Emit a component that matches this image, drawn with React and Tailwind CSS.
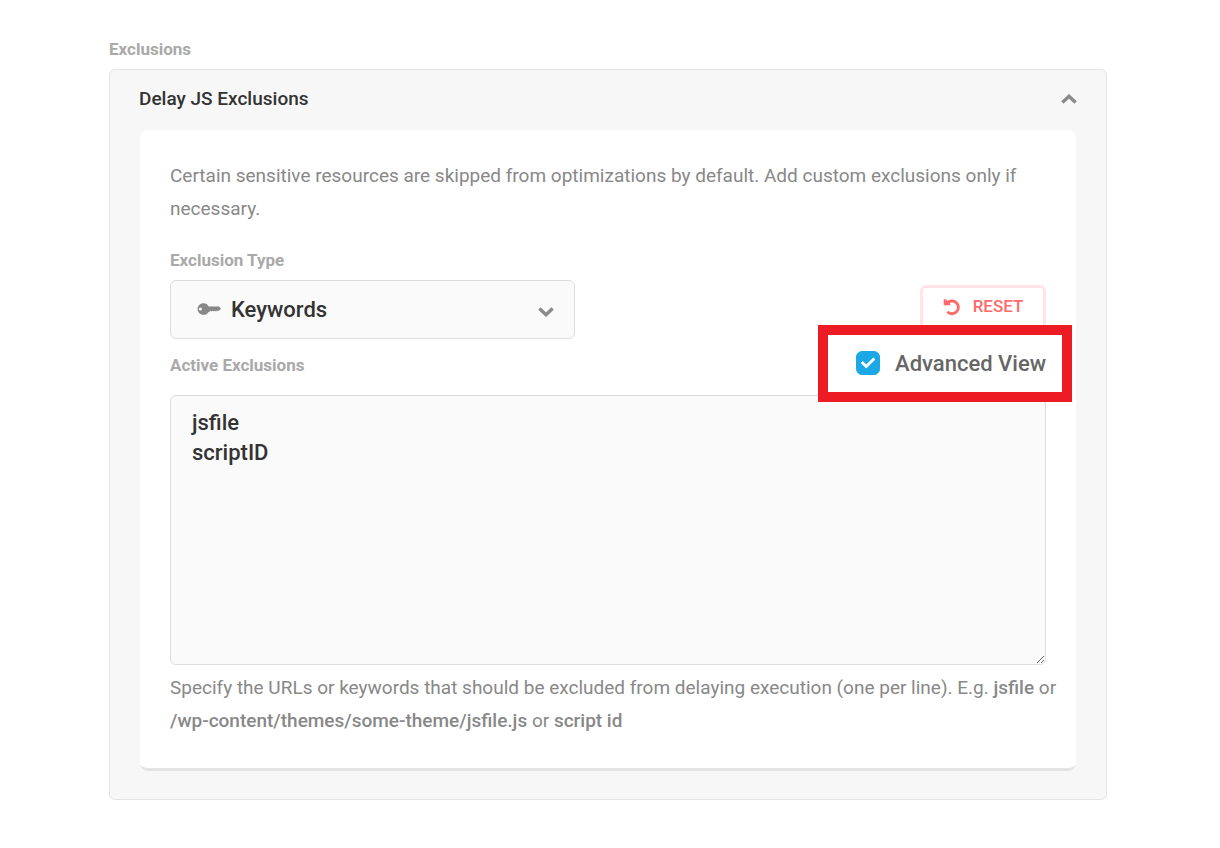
import { useState } from "react";
import { FaCheck } from "react-icons/fa";

function KeyIcon() {
  return (
    <svg viewBox="0 0 24 12" className="h-3 w-6" fill="currentColor" aria-hidden="true">
      <path
        fillRule="evenodd"
        d="M6.500 0.200C3 0.200 0.600 2.700 0.600 6s2.400 5.800 5.900 5.800c2.200 0 3.900-1 5-2.900l1.300-.5.9-.7 1 .8 1.100-.8 1.100.9 1.100-.9 1 .8 1-.8h2L24 5.700 22.200 3.600H11.700C10.700 1.400 8.900.2 6.500.2ZM3.400 4.500a1.500 1.500 0 1 1 0 3 1.500 1.500 0 0 1 0-3Z"
      />
    </svg>
  );
}

function UndoIcon() {
  return (
    <svg viewBox="0 0 18 18" className="size-[18px]" fill="none" aria-hidden="true">
      <path d="M4 5.300A6.400 6.400 0 1 1 4.300 13.700" stroke="currentColor" strokeWidth="2.900" />
      <path d="M0.700 1.200v6.100h6.500V5.600L2.900 1.200Z" fill="currentColor" />
    </svg>
  );
}

function Chevron({ up = false }) {
  return (
    <svg viewBox="0 0 16 10" className="h-2.5 w-4" fill="none" stroke="#8a8a8a" strokeWidth="3.400" aria-hidden="true">
      <path d={up ? "M1.400 8.600 8 2.300l6.600 6.300" : "M1.400 1.400 8 7.700l6.600-6.300"} />
    </svg>
  );
}

const caption = "text-[17px] leading-6 font-bold text-[#a9a9a9]";

export default function App() {
  const [open, setOpen] = useState(true);
  const [advanced, setAdvanced] = useState(true);

  return (
    <main className="bg-white pt-[37px] pr-[113px] pb-12 pl-[109px] font-['Roboto',sans-serif]">
      <h2 className={caption}>Exclusions</h2>
      <section className="mt-2 rounded-md border border-[#e4e4e4] bg-[#f7f7f7] px-[29px] pb-7">
        <button
          type="button"
          aria-expanded={open}
          onClick={() => setOpen(!open)}
          className="flex h-15 w-full items-center justify-between pb-0.5 text-[19px] font-medium text-[#333]"
        >
          <span>Delay JS Exclusions</span>
          <Chevron up />
        </button>
        {open && (
          <div className="mx-px rounded-lg border-b-3 border-[#e4e4e4] bg-white px-[30px] pt-[29px] pb-[31px] text-[#888]">
            <p className="text-[19px] leading-[33px]">
              Certain sensitive resources are skipped from optimizations by default. Add custom exclusions only if
              necessary.
            </p>
            <label htmlFor="type" className={`${caption} mt-[23px] block`}>
              Exclusion Type
            </label>
            <div className="mt-2 flex items-start justify-between">
              <div className="relative w-[405px]">
                <select
                  id="type"
                  className="h-[59px] w-full appearance-none rounded-md border border-[#ddd] bg-[#fafafa] pr-12 pl-15 text-[22px] font-medium text-[#333]"
                >
                  <option>Keywords</option>
                </select>
                <span className="pointer-events-none absolute inset-y-0 left-[27px] flex items-center pb-0.5">
                  <KeyIcon />
                </span>
                <span className="pointer-events-none absolute inset-y-0 right-[21px] flex items-center pt-1">
                  <Chevron />
                </span>
              </div>
              <button
                type="button"
                className="mt-[5px] flex h-11 w-[126px] items-center justify-center gap-3 rounded-md border-3 border-[#ffe3e7] text-[17px] font-medium text-[#ff6b6b]"
              >
                <UndoIcon />
                RESET
              </button>
            </div>
            <div className="mt-2 flex h-12 items-start justify-between">
              <label htmlFor="list" className={`${caption} pt-1.5`}>
                Active Exclusions
              </label>
              <label className="relative flex h-8 items-center gap-[15px] text-[22px] font-medium text-[#666]">
                <span className="relative flex size-6">
                  <input
                    type="checkbox"
                    checked={advanced}
                    onChange={(e) => setAdvanced(e.target.checked)}
                    className="size-6 appearance-none rounded-md border border-[#1ba8e5] bg-white checked:bg-[#1ba8e5]"
                  />
                  <FaCheck className="pointer-events-none absolute inset-0 m-auto size-3.5 text-white" />
                </span>
                Advanced View
                <span className="pointer-events-none absolute -top-[22px] -right-[26px] -bottom-[23px] -left-[38px] border-10 border-[#ed1c24]" />
              </label>
            </div>
            <textarea
              id="list"
              defaultValue={"jsfile\nscriptID"}
              spellCheck={false}
              className="block h-[270px] w-full rounded-md border border-[#ddd] bg-[#fafafa] px-[21px] py-3 text-[22px] leading-[30px] font-medium text-[#333]"
            />
            <p className="mt-1.5 -mr-5 text-[19px] leading-[33px]">
              Specify the URLs or keywords that should be excluded from delaying execution (one per line). E.g.{" "}
              <strong className="font-medium">jsfile</strong> or{" "}
              <strong className="font-medium">/wp-content/themes/some-theme/jsfile.js</strong> or{" "}
              <strong className="font-medium">script id</strong>
            </p>
          </div>
        )}
      </section>
    </main>
  );
}
